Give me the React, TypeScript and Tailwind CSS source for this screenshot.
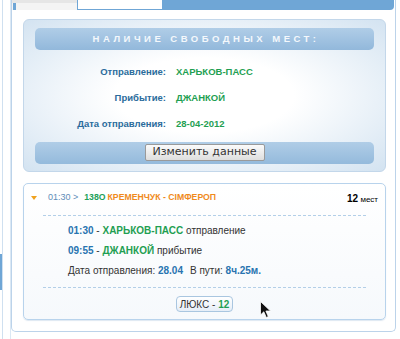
export default function App() {
  return (
    <div className="relative flex h-[339px] w-[400px] overflow-hidden bg-white font-['Liberation_Sans',Arial,sans-serif]">
      {/* left gutter */}
      <div className="flex w-[11px] shrink-0">
        <div className="flex w-[2px] flex-col">
          <div className="h-[254px]" />
          <div className="h-[36px] bg-[#6fa6d6]" />
        </div>
        <div className="w-px bg-[#cfe0f0]" />
        <div className="w-[7px]" />
        <div className="w-px bg-[#dbe8f4]" />
      </div>

      {/* outer panel */}
      <div className="mb-[7px] mr-[4px] flex flex-1 flex-col rounded-b-[5px] border border-t-0 border-[#bcd3ea]">
        {/* tab strip */}
        <div className="flex h-[10px]">
          <div className="flex w-[65px] flex-col bg-[#f4f4f4]">
            <div className="h-[3px] bg-[#e6e6e6]" />
            <div className="ml-[1px] h-[7px] w-[3px] bg-[#6fa6d6]" />
          </div>
          <div className="w-[85px] border-b border-l border-[#6fa6d6] bg-white" />
          <div className="flex-1 rounded-br-[4px] bg-[#6fa6d6]" />
          <div className="w-px" />
        </div>

        {/* availability card */}
        <div className="ml-[11px] mr-[9px] mt-[9px] flex flex-col rounded-[6px] border border-[#c3d7ea] bg-[radial-gradient(ellipse_at_center,#ffffff_35%,#d3e3f1_100%)] px-[11px] pb-[7px] pt-[8px]">
          <div className="flex h-[22px] items-center justify-center rounded-[5px] bg-gradient-to-b from-[#b0cde7] to-[#92b8db] pl-[3px] text-[9.5px] font-bold tracking-[3.5px] text-[#f4f8fc]">
            НАЛИЧИЕ СВОБОДНЫХ МЕСТ:
          </div>
          <div className="mt-[9px] grid grid-cols-[131px_1fr] gap-x-[10px] text-[9.5px] font-bold">
            <div className="flex h-[26px] items-center justify-end text-[#2b6c9c]">Отправление:</div>
            <div className="flex h-[26px] items-center text-[#1f9f52]">ХАРЬКОВ-ПАСС</div>
            <div className="flex h-[26px] items-center justify-end text-[#2b6c9c]">Прибытие:</div>
            <div className="flex h-[26px] items-center text-[#1f9f52]">ДЖАНКОЙ</div>
            <div className="flex h-[26px] items-center justify-end text-[#2b6c9c]">Дата отправления:</div>
            <div className="flex h-[26px] items-center text-[#1f9f52]">28-04-2012</div>
          </div>
          <div className="mt-[5px] flex h-[22px] items-start justify-center rounded-[5px] bg-gradient-to-b from-[#b0cde7] to-[#94badc] pt-[2px]">
            <button className="flex h-[17px] w-[120px] items-center justify-center rounded-[2px] border border-[#9a9a9a] bg-gradient-to-b from-[#fbfbfb] to-[#dedede] font-['DejaVu_Sans',sans-serif] text-[11px] text-[#333]">
              Изменить данные
            </button>
          </div>
        </div>

        {/* train card */}
        <div className="ml-[11px] mr-[9px] mt-[11px] flex flex-col rounded-[5px] border border-[#b8d3ec] bg-gradient-to-b from-white to-[#f6f9fc] pb-[7px] pt-[5px] shadow-[0_1px_1px_rgba(120,160,200,0.25)]">
          <div className="flex h-[18px] items-center pl-[7px] pr-[7px] text-[8.7px]">
            <svg width="6" height="4" viewBox="0 0 6 4" className="mr-[11px]">
              <path d="M0 0 L6 0 L3 4 Z" fill="#f0a21e" />
            </svg>
            <span className="text-[9px] text-[#5f8db8]">01:30 &gt;</span>
            <span className="ml-[6px] font-bold text-[#21a059]">138О</span>
            <span className="ml-[2px] font-bold text-[#f08a1c]">КРЕМЕНЧУК - СІМФЕРОП</span>
            <span className="ml-auto text-[8px] text-black">
              <span className="text-[10px] font-bold">12</span> мест
            </span>
          </div>
          <div className="mx-[19px] mt-[8px] border-t border-dashed border-[#b3cfe8]" />
          <div className="mt-[4px] flex flex-col pl-[44px] text-[10px] text-[#333]">
            <div className="flex h-[20px] items-center whitespace-pre">
              <span className="font-bold text-[#2874b0]">01:30</span>
              <span> - </span>
              <span className="font-bold text-[#1f9f52]">ХАРЬКОВ-ПАСС</span>
              <span> отправление</span>
            </div>
            <div className="flex h-[20px] items-center whitespace-pre">
              <span className="font-bold text-[#2874b0]">09:55</span>
              <span> - </span>
              <span className="font-bold text-[#1f9f52]">ДЖАНКОЙ</span>
              <span> прибытие</span>
            </div>
            <div className="flex h-[20px] items-center whitespace-pre">
              <span>Дата отправления: </span>
              <span className="font-bold text-[#2874b0]">28.04</span>
              <span className="ml-[7px]">В пути: </span>
              <span className="font-bold text-[#2874b0]">8ч.25м.</span>
            </div>
          </div>
          <div className="mx-[19px] mt-[7px] border-t border-dashed border-[#b3cfe8]" />
          <div className="mt-[8px] flex justify-center">
            <button className="flex h-[16px] w-[57px] items-center justify-center whitespace-pre rounded-[4px] border border-[#a9c6e0] bg-gradient-to-b from-white to-[#e6eef7] text-[10px] text-[#333]">
              ЛЮКС - <span className="font-bold text-[#1f9f52]">12</span>
            </button>
          </div>
        </div>
      </div>

      {/* mouse pointer */}
      <svg width="12" height="18" viewBox="0 0 12 18" className="absolute left-[260px] top-[301px]">
        <path d="M0.5 0.5 L0.5 14 L3.8 10.8 L6.3 16.5 L8.3 15.6 L5.9 10 L10.5 10 Z" fill="#111" stroke="#fff" strokeWidth="0.8" />
      </svg>
    </div>
  );
}
